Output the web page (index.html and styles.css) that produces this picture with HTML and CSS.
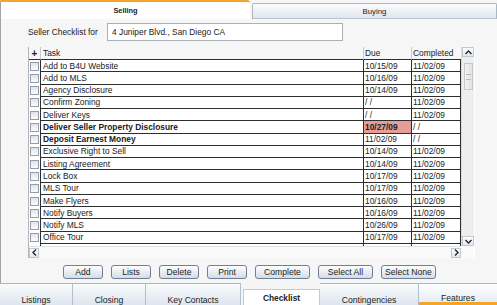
FILE: index.html
```html
<!DOCTYPE html>
<html lang="en">
<head>
    <meta charset="UTF-8">
    <title>Seller Checklist</title>
    <link rel="stylesheet" href="styles.css">
</head>
<body>
    <div class="app">
        <div class="top-tabs">
            <div class="top-tab active">Selling</div>
            <div class="top-tab">Buying</div>
        </div>

        <div class="panel">
            <div class="address-row">
                <span class="address-label">Seller Checklist for</span>
                <div class="address-box">4 Juniper Blvd., San Diego CA</div>
            </div>

            <div class="checklist">
                <div class="view">
                    <div class="row head">
                        <div class="cell check plus">+</div>
                        <div class="cell task">Task</div>
                        <div class="cell due">Due</div>
                        <div class="cell done">Completed</div>
                    </div>
                    <div class="row">
                        <div class="cell check"><span class="box"></span></div>
                        <div class="cell task">Add to B4U Website</div>
                        <div class="cell due">10/15/09</div>
                        <div class="cell done">11/02/09</div>
                    </div>
                    <div class="row">
                        <div class="cell check"><span class="box"></span></div>
                        <div class="cell task">Add to MLS</div>
                        <div class="cell due">10/16/09</div>
                        <div class="cell done">11/02/09</div>
                    </div>
                    <div class="row">
                        <div class="cell check"><span class="box"></span></div>
                        <div class="cell task">Agency Disclosure</div>
                        <div class="cell due">10/14/09</div>
                        <div class="cell done">11/02/09</div>
                    </div>
                    <div class="row">
                        <div class="cell check"><span class="box"></span></div>
                        <div class="cell task">Confirm Zoning</div>
                        <div class="cell due">/ /</div>
                        <div class="cell done">11/02/09</div>
                    </div>
                    <div class="row">
                        <div class="cell check"><span class="box"></span></div>
                        <div class="cell task">Deliver Keys</div>
                        <div class="cell due">/ /</div>
                        <div class="cell done">11/02/09</div>
                    </div>
                    <div class="row pending">
                        <div class="cell check"><span class="box"></span></div>
                        <div class="cell task">Deliver Seller Property Disclosure</div>
                        <div class="cell due overdue">10/27/09</div>
                        <div class="cell done">/ /</div>
                    </div>
                    <div class="row pending">
                        <div class="cell check"><span class="box"></span></div>
                        <div class="cell task">Deposit Earnest Money</div>
                        <div class="cell due">11/02/09</div>
                        <div class="cell done">/ /</div>
                    </div>
                    <div class="row">
                        <div class="cell check"><span class="box"></span></div>
                        <div class="cell task">Exclusive Right to Sell</div>
                        <div class="cell due">10/14/09</div>
                        <div class="cell done">11/02/09</div>
                    </div>
                    <div class="row">
                        <div class="cell check"><span class="box"></span></div>
                        <div class="cell task">Listing Agreement</div>
                        <div class="cell due">10/14/09</div>
                        <div class="cell done">11/02/09</div>
                    </div>
                    <div class="row">
                        <div class="cell check"><span class="box"></span></div>
                        <div class="cell task">Lock Box</div>
                        <div class="cell due">10/17/09</div>
                        <div class="cell done">11/02/09</div>
                    </div>
                    <div class="row">
                        <div class="cell check"><span class="box"></span></div>
                        <div class="cell task">MLS Tour</div>
                        <div class="cell due">10/17/09</div>
                        <div class="cell done">11/02/09</div>
                    </div>
                    <div class="row">
                        <div class="cell check"><span class="box"></span></div>
                        <div class="cell task">Make Flyers</div>
                        <div class="cell due">10/16/09</div>
                        <div class="cell done">11/02/09</div>
                    </div>
                    <div class="row">
                        <div class="cell check"><span class="box"></span></div>
                        <div class="cell task">Notify Buyers</div>
                        <div class="cell due">10/16/09</div>
                        <div class="cell done">11/02/09</div>
                    </div>
                    <div class="row">
                        <div class="cell check"><span class="box"></span></div>
                        <div class="cell task">Notify MLS</div>
                        <div class="cell due">10/26/09</div>
                        <div class="cell done">11/02/09</div>
                    </div>
                    <div class="row">
                        <div class="cell check"><span class="box"></span></div>
                        <div class="cell task">Office Tour</div>
                        <div class="cell due">10/17/09</div>
                        <div class="cell done">11/02/09</div>
                    </div>
                    <div class="row">
                        <div class="cell check"><span class="box"></span></div>
                        <div class="cell task"></div>
                        <div class="cell due"></div>
                        <div class="cell done"></div>
                    </div>
                </div>

                <div class="vscroll">
                    <div class="sb-btn">
                        <svg width="7" height="5" viewBox="0 0 7 5"><path d="M0.5 4 L3.5 1 L6.5 4" fill="none" stroke="#1e2a38" stroke-width="1.4"/></svg>
                    </div>
                    <div class="sb-track">
                        <div class="thumb"><span class="grip"></span></div>
                    </div>
                    <div class="sb-btn">
                        <svg width="7" height="5" viewBox="0 0 7 5"><path d="M0.5 1 L3.5 4 L6.5 1" fill="none" stroke="#1e2a38" stroke-width="1.4"/></svg>
                    </div>
                </div>

                <div class="hscroll">
                    <div class="sb-btn">
                        <svg width="5" height="7" viewBox="0 0 5 7"><path d="M4 0.5 L1 3.5 L4 6.5" fill="none" stroke="#1e2a38" stroke-width="1.4"/></svg>
                    </div>
                    <div class="sb-btn">
                        <svg width="5" height="7" viewBox="0 0 5 7"><path d="M1 0.5 L4 3.5 L1 6.5" fill="none" stroke="#1e2a38" stroke-width="1.4"/></svg>
                    </div>
                </div>
                <div class="corner"></div>
            </div>

            <div class="btn-row">
                <button class="btn">Add</button>
                <button class="btn">Lists</button>
                <button class="btn">Delete</button>
                <button class="btn">Print</button>
                <button class="btn btn-wide">Complete</button>
                <button class="btn btn-wide">Select All</button>
                <button class="btn btn-wide">Select None</button>
            </div>
        </div>

        <div class="bottom-tabs">
            <div class="btab" style="width: 73px;">Listings</div>
            <div class="btab" style="width: 73px;">Closing</div>
            <div class="btab" style="width: 95px;">Key Contacts</div>
            <div class="btab active" style="width: 77px;">Checklist</div>
            <div class="btab" style="width: 99px;">Contingencies</div>
            <div class="btab hover">Features</div>
        </div>
    </div>
</body>
</html>
```

FILE: styles.css
```css
body {
    margin: 0;
    font-family: "Liberation Sans", Arial, sans-serif;
    font-size: 8.4px;
    color: #222;
    background-color: #f5f5f5;
}

.app {
    width: 497px;
    height: 305px;
    overflow: hidden;
    display: flex;
    flex-direction: column;
}

/* top tabs */
.top-tabs {
    display: flex;
    height: 19px;
    flex: none;
}

.top-tab {
    flex: 1;
    display: flex;
    align-items: center;
    justify-content: center;
    font-size: 7.8px;
    margin-top: 3px;
    margin-left: 2px;
    border: 1px solid #aab7c6;
    border-bottom-color: #b9c3cd;
    border-radius: 2px 2px 0 0;
    background: linear-gradient(#fbfcfd, #dfe6ed);
    box-sizing: border-box;
}

.top-tab.active {
    flex: 0 0 250px;
    margin: 0;
    border: none;
    border-top: 2px solid #f3a52a;
    border-left: 1px solid #a3a3a3;
    border-radius: 0 3px 0 0;
    background-color: #fff;
    background-image: none;
    font-weight: bold;
    font-size: 7.4px;
}

/* main panel */
.panel {
    flex: none;
    height: 264px;
    box-sizing: border-box;
    padding: 4px 0 0 27px;
    border-left: 1px solid #a3a3a3;
    background-color: #f6f6f6;
}

.address-row {
    display: flex;
    align-items: center;
    height: 18px;
}

.address-label {
    width: 79px;
}

.address-box {
    width: 236px;
    height: 18px;
    box-sizing: border-box;
    padding-left: 4px;
    display: flex;
    align-items: center;
    border: 1px solid #a9b0b8;
    background-color: #fff;
}

/* checklist grid */
.checklist {
    margin-top: 6px;
    width: 446px;
    height: 211px;
    display: grid;
    grid-template-columns: 432px 13px;
    grid-template-rows: 199px 12px;
    border-left: 1px solid #b5b5b5;
    background-color: #fff;
}

.view {
    overflow: hidden;
}

.row {
    display: grid;
    grid-template-columns: 11px 323px 48px 50px;
    height: 12.28px;
}

.row.head {
    height: 13px;
    background-color: #f7f7f7;
}

.cell {
    display: flex;
    align-items: center;
    box-sizing: border-box;
    padding-left: 1px;
    white-space: nowrap;
    overflow: hidden;
    border-left: 1px solid #2e2e2e;
    border-bottom: 1px solid #2e2e2e;
}

.cell.task {
    padding-left: 2px;
}

.cell.done {
    border-right: 1px solid #2e2e2e;
}

.cell.check {
    border: none;
    padding: 0;
    justify-content: center;
}

.head .cell {
    border-left-color: #c9c9c9;
}

.head .cell.done {
    border-right: none;
}

.head .cell.check {
    border-bottom: 1px solid #2e2e2e;
}

.plus {
    font-weight: bold;
    font-size: 10px;
}

.box {
    width: 9px;
    height: 9px;
    box-sizing: border-box;
    border: 1px solid #939dab;
    background: linear-gradient(#dfe4ea, #fbfcfd);
}

.pending .task {
    font-weight: bold;
}

.overdue {
    background-color: #e49d97;
    font-weight: bold;
}

/* scrollbars */
.vscroll {
    display: flex;
    flex-direction: column;
    background-color: #eeeeee;
    border-left: 1px solid #dcdcdc;
}

.sb-btn {
    height: 10px;
    flex: none;
    display: flex;
    align-items: center;
    justify-content: center;
    background: linear-gradient(#fdfdfd, #e4e7eb);
    border: 1px solid #c3c8ce;
    box-sizing: border-box;
}

.sb-track {
    flex: 1;
    padding: 6px 0 0 2px;
}

.thumb {
    height: 27px;
    width: 9px;
    box-sizing: border-box;
    border: 1px solid #c5c9ce;
    background: linear-gradient(90deg, #f4f4f4, #e2e2e2);
    display: flex;
    align-items: center;
    justify-content: center;
}

.grip {
    width: 5px;
    height: 4px;
    border-top: 1px solid #b8b8b8;
    border-bottom: 1px solid #b8b8b8;
}

.hscroll {
    display: flex;
    justify-content: space-between;
    align-items: center;
    background-color: #f9f9f9;
    border-top: 1px solid #e2e2e2;
}

.hscroll .sb-btn {
    width: 10px;
    height: 10px;
}

.corner {
    background-color: #fbfbfb;
}

/* buttons */
.btn-row {
    display: flex;
    gap: 8px;
    margin-top: 7px;
    padding-left: 35px;
}

.btn {
    width: 40px;
    height: 14px;
    padding: 0;
    border: 1px solid #6f8096;
    border-radius: 3px;
    background: linear-gradient(#fdfefe, #d4dce7);
    font-family: "Liberation Sans", Arial, sans-serif;
    font-size: 8.6px;
    color: #222;
}

.btn-wide {
    width: 55px;
}

/* bottom tabs */
.bottom-tabs {
    flex: none;
    display: flex;
    align-items: flex-start;
    height: 31px;
}

.btab {
    height: 31px;
    display: flex;
    align-items: center;
    justify-content: center;
    padding-top: 1px;
    box-sizing: border-box;
    font-size: 8.6px;
    border-top: 1px solid #a9b6c4;
    border-right: 1px solid #b3bfcc;
    background: linear-gradient(#f9fbfd, #dde5ee 70%);
}

.btab.active {
    margin: 6px 0 0 2px;
    height: 25px;
    align-items: flex-start;
    padding-top: 3px;
    background: #fff;
    font-weight: bold;
    font-size: 8.4px;
    border-top-color: #c8c8c8;
    border-left: 1px solid #c8c8c8;
    border-right-color: #c8c8c8;
}

.btab.hover {
    flex: 1;
    height: 22px;
    padding-top: 9px;
    border-right: none;
    border-bottom: 3px solid #f3a52a;
    background: linear-gradient(#fdfeff, #e8eef4);
}
```
